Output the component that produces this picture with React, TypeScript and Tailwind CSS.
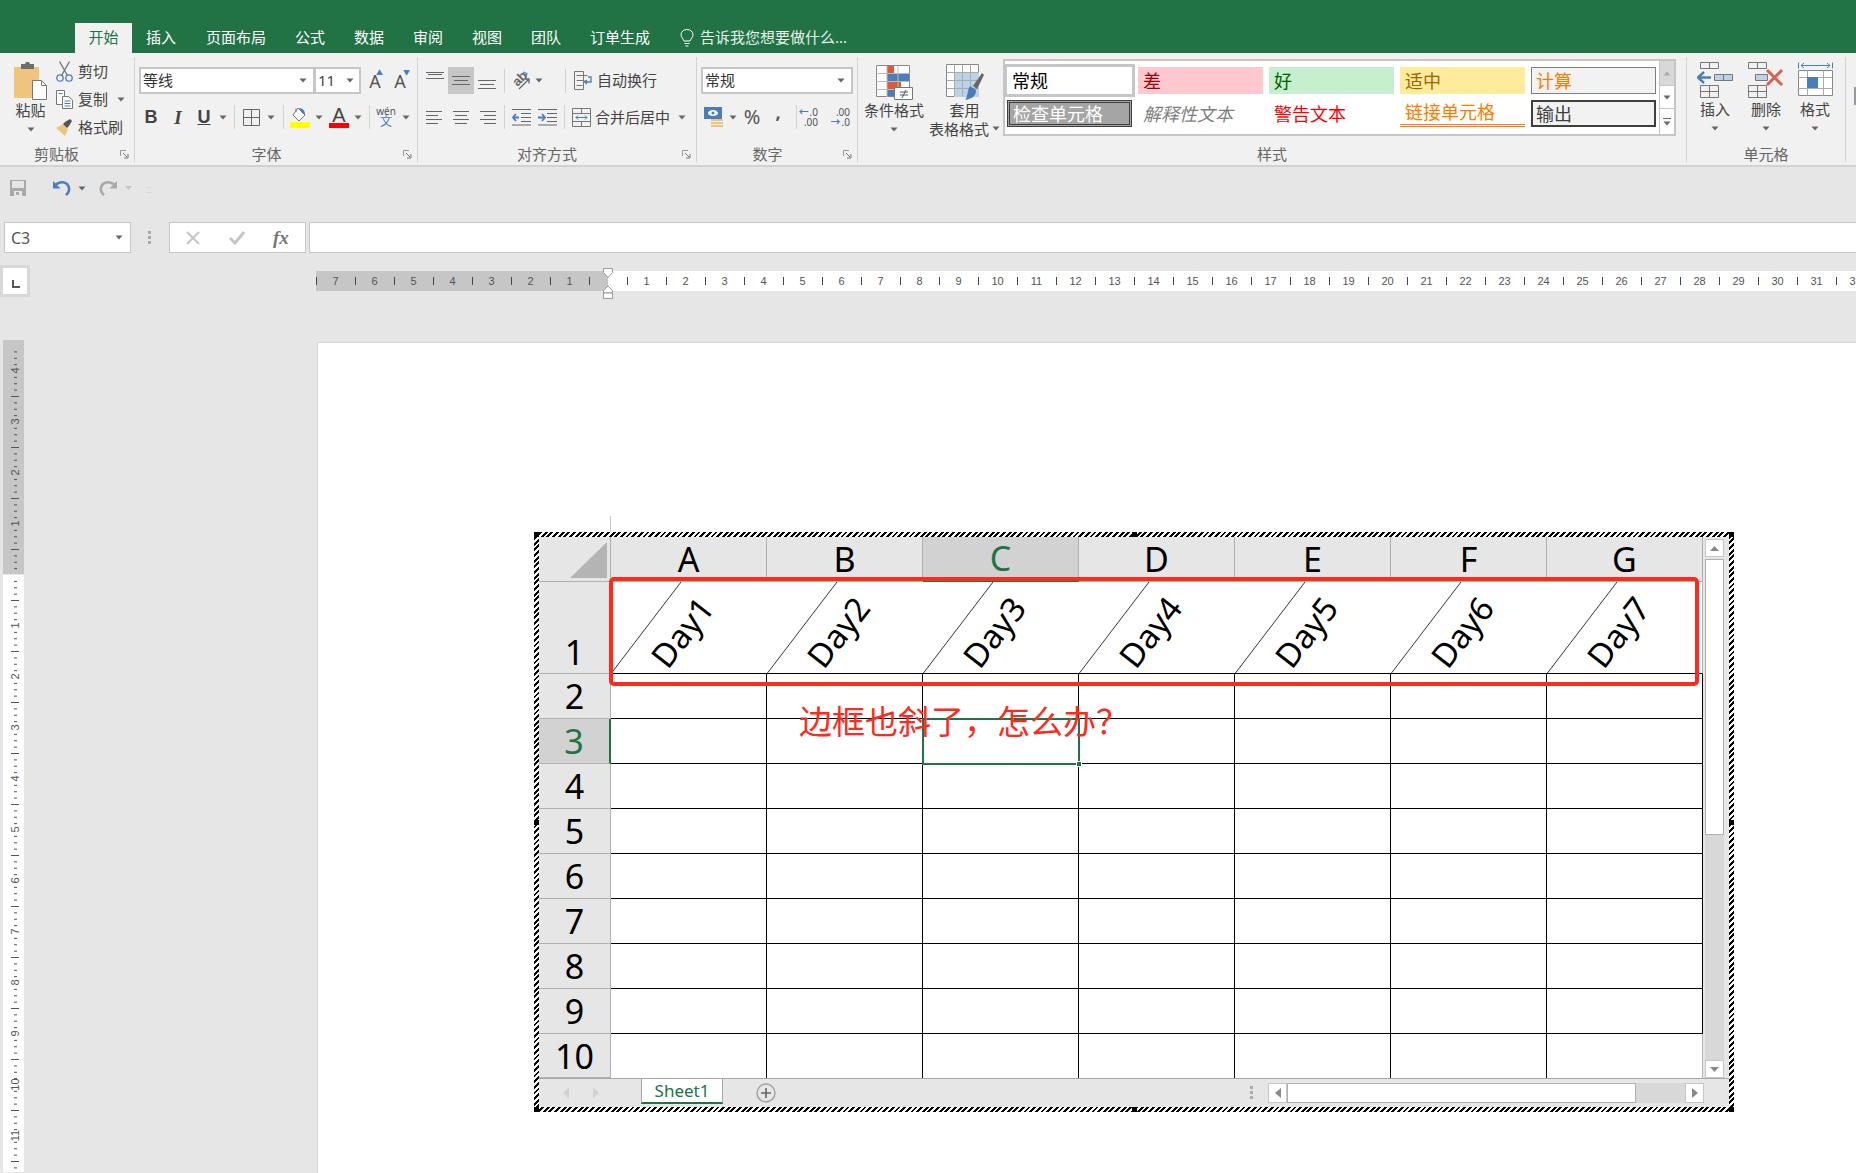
import { Fragment } from "react";

function Caret({ className = "" }: { className?: string }) {
  return (
    <svg width="8" height="5" viewBox="0 0 8 5" className={`shrink-0 ${className}`}>
      <path d="M0.5 0.5h7L4 4.5z" fill="#666" />
    </svg>
  );
}

function Sep({ className = "" }: { className?: string }) {
  return <div className={`h-[24px] w-px shrink-0 bg-[#d2d2d2] ${className}`} />;
}

function Launcher() {
  return (
    <svg width="9" height="9" viewBox="0 0 9 9" className="shrink-0">
      <path d="M.5 6V.5H6" fill="none" stroke="#999" />
      <path d="M3 3l4 4M4 8h4V4" fill="none" stroke="#777" />
    </svg>
  );
}

function Group({ label, width, children, launcher = false, center }: { label: string; width: string; children: React.ReactNode; launcher?: boolean; center?: string }) {
  return (
    <div className={`flex h-[105px] shrink-0 flex-col border-r border-[#d2d2d2] ${width}`}>
      <div className="min-h-0 flex-1">{children}</div>
      <div className="relative flex h-[16px] items-center justify-center text-[15px] leading-none text-[#666]">
        <span className={center}>{label}</span>
        {launcher && (
          <span className="absolute right-[5px] top-[4px] flex">
            <Launcher />
          </span>
        )}
      </div>
    </div>
  );
}

function PasteIcon() {
  return (
    <svg width="35" height="40" viewBox="0 0 35 40">
      <path d="M1 6h25v31H1z" fill="#eec47f" />
      <path d="M8 6V3h4l1-2h3l1 2h4v5H8z" fill="#6d6d6d" />
      <path d="M19.5 19.5h9l5 5v14h-14z" fill="#fff" stroke="#777" />
      <path d="M28.5 19.5v5h5" fill="none" stroke="#777" />
    </svg>
  );
}

function ScissorsIcon() {
  return (
    <svg width="17" height="21" viewBox="0 0 17 21" fill="none">
      <path d="M3.5 .5l8 14M13.5 .5l-8 14" stroke="#777" strokeWidth="1.4" />
      <circle cx="4" cy="17" r="3.2" stroke="#4a7ebb" strokeWidth="1.3" />
      <circle cx="13" cy="17" r="3.2" stroke="#4a7ebb" strokeWidth="1.3" />
    </svg>
  );
}

function CopyIcon() {
  return (
    <svg width="17" height="19" viewBox="0 0 17 19" fill="none">
      <path d="M.5.5h8v14h-8z" fill="#fff" stroke="#777" />
      <path d="M6.5 6.5h6l4 3.5v8.500h-10z" fill="#fff" stroke="#777" />
      <path d="M8.500 11h6M8.500 13.500h6M8.500 16h6M2.500 3.500h4" stroke="#4a7ebb" />
    </svg>
  );
}

function PainterIcon() {
  return (
    <svg width="17" height="17" viewBox="0 0 17 17">
      <path d="M7 5l5 5-3 7-9-8z" fill="#eec47f" />
      <path d="M7 5l4 4 2-2 3-5-2-2-5 3z" fill="#555" />
    </svg>
  );
}

function BorderIcon() {
  return (
    <svg width="17" height="17" viewBox="0 0 17 17" fill="none">
      <path d="M.5.5h16v16H.5zM8.500.5v16M.5 8.500h16" stroke="#666" />
    </svg>
  );
}

function FillIcon() {
  return (
    <svg width="20" height="21" viewBox="0 0 20 21">
      <path d="M8 1l7 7-6 6-6-6z" fill="#fff" stroke="#777" />
      <path d="M6 5V1.500" stroke="#777" fill="none" />
      <path d="M9 1c4 0 6 3 6 7l-3-2z" fill="#4a7ebb" />
      <path d="M0 15h20v6H0z" fill="#ffff00" />
    </svg>
  );
}

function Lines({ rows, align }: { rows: number[]; align: "left" | "center" | "right" }) {
  return (
    <svg width="18" height="18" viewBox="0 0 18 18">
      {rows.map((w, i) => {
        const x = align === "left" ? 0 : align === "right" ? 18 - w : (18 - w) / 2;
        return <rect key={i} x={x} y={3 + i * 4} width={w} height="1" fill="#666" />;
      })}
    </svg>
  );
}

function VAlign({ pos }: { pos: "top" | "middle" | "bottom" }) {
  const ys = pos === "top" ? [5, 7, 11] : pos === "middle" ? [9, 13, 17] : [13, 17, 21];
  return (
    <svg width="18" height="27" viewBox="0 0 18 27">
      <rect x="0" y={ys[0]} width="18" height="1" fill="#666" />
      <rect x="2" y={ys[1]} width="14" height="1" fill="#666" />
      <rect x="0" y={ys[2]} width="18" height="1" fill="#666" />
    </svg>
  );
}

function OrientIcon() {
  return (
    <div className="relative h-[20px] w-[20px]">
      <span className="absolute left-0 top-[1px] -rotate-45 font-['Liberation_Sans',sans-serif] text-[13px] font-bold leading-none text-[#666]">ab</span>
      <svg width="20" height="20" viewBox="0 0 20 20" fill="none" className="absolute left-0 top-0">
        <path d="M7 18L17 8M12.500 8H17v4.500" stroke="#666" strokeWidth="1.300" />
        <path d="M11 1l4 1.500-1.500 4" stroke="#4a7ebb" strokeWidth="1.200" />
      </svg>
    </div>
  );
}

function WrapIcon() {
  return (
    <svg width="19" height="20" viewBox="0 0 19 20" fill="none">
      <path d="M.5.500h9v18h-9zM2.500 4.500h11M2.500 9.500h8M2.500 14.500h6" stroke="#777" />
      <path d="M14 6h3v5h-6M13 9l-2.500 2 2.500 2" stroke="#4a7ebb" strokeWidth="1.300" />
    </svg>
  );
}

function MergeIcon() {
  return (
    <svg width="19" height="19" viewBox="0 0 19 19" fill="none">
      <path d="M.5.500h18v18H.5zM.5 5.500h18M.5 13.500h18M9.500.500v5M9.500 13.500v5" stroke="#777" />
      <path d="M4 9.500h11M6 7.500l-2 2 2 2M13 7.500l2 2-2 2" stroke="#4a7ebb" />
    </svg>
  );
}

function IndentIcon({ flip = false }: { flip?: boolean }) {
  return (
    <svg width="19" height="18" viewBox="0 0 19 18" fill="none">
      <path d="M0 1.500h19M9 5.500h10M9 9.500h10M9 13.500h10M0 17h19" stroke="#666" />
      {flip ? <path d="M7 9.500H1M4 6l-3 3.500L4 13" stroke="#4a7ebb" strokeWidth="1.800" /> : <path d="M0 9.500h7M4 6l3 3.500L4 13" stroke="#4a7ebb" strokeWidth="1.800" />}
    </svg>
  );
}

function MoneyIcon() {
  return (
    <svg width="19" height="20" viewBox="0 0 19 20">
      <rect x="0" y="0" width="18" height="12" fill="#4a7ebb" />
      <ellipse cx="9" cy="6" rx="5" ry="3" fill="#fff" />
      <circle cx="9" cy="6" r="1.500" fill="#4a7ebb" />
      <path d="M7 12h12v2H7zM7 15h12v2H7zM7 18h12v2H7z" fill="#eec47f" />
    </svg>
  );
}

function DecimalIcon({ up }: { up: boolean }) {
  const top = up ? ".0" : ".00";
  const bottom = up ? ".00" : ".0";
  return (
    <div className="flex w-[20px] flex-col items-end text-[10px] leading-[10px] text-[#555]">
      <div className="flex items-center">
        {up && <span className="mr-px text-[10px] font-bold leading-[10px] text-[#4a7ebb]">←</span>}
        <span>{top}</span>
      </div>
      <div className="flex items-center">
        {!up && <span className="mr-px text-[10px] font-bold leading-[10px] text-[#4a7ebb]">→</span>}
        <span>{bottom}</span>
      </div>
    </div>
  );
}

function CondIcon() {
  return (
    <svg width="37" height="35" viewBox="0 0 37 35">
      <path d="M.5.500h33v31H.5z" fill="#fff" stroke="#888" />
      <path d="M11 1h7v7h-7z" fill="#dc5939" />
      <path d="M11 9h22v7H11z" fill="#4a7ebb" />
      <path d="M11 17h14v7H11z" fill="#dc5939" />
      <path d="M11 25h8v6h-8z" fill="#4a7ebb" />
      <path d="M.5 8.500h33M.5 16.500h33M.5 24.500h33M11 1v31M22 1v31" stroke="#bbb" fill="none" />
      <path d="M18.500 22.500h18v12h-18z" fill="#fff" stroke="#777" />
      <path d="M24 27h8M24 30h8M30 25l-4 8" stroke="#555" fill="none" />
    </svg>
  );
}

function TableIcon() {
  return (
    <svg width="38" height="36" viewBox="0 0 38 36">
      <path d="M.5.500h32v32H.5z" fill="#fff" stroke="#888" />
      <path d="M8 8h25v25H8z" fill="#bcd2e9" />
      <path d="M.5 8.500h32M.5 16.500h32M.5 24.500h32M8.500.500v32M16.500.500v32M24.500.500v32" stroke="#aaa" fill="none" />
      <path d="M27 22l9-13 2 2-7 14z" fill="#666" />
      <path d="M24 22l6 4c0 6-4 9-11 10 3-3 2-10 5-14z" fill="#4a7ebb" />
    </svg>
  );
}

function InsertIcon() {
  return (
    <svg width="36" height="36" viewBox="0 0 36 36" fill="none">
      <path d="M3.500.500h18v6h-18zM12.500.500v6M3.500 23.500h18v12h-18zM12.500 23.500v12M3.500 29.500h18" stroke="#777" />
      <path d="M17.500 12.500h18v6h-18z" fill="#bcd2e9" stroke="#777" />
      <path d="M26.500 12.500v6" stroke="#777" />
      <path d="M14 15.500H2M7 10l-6 5.500L7 21" stroke="#4a7ebb" strokeWidth="2.400" />
    </svg>
  );
}

function DeleteIcon() {
  return (
    <svg width="36" height="36" viewBox="0 0 36 36" fill="none">
      <path d="M.5.500h18v6H.5zM9.500.500v6M.5 23.500h18v12H.5zM9.500 23.500v12M.5 29.500h18" stroke="#777" />
      <path d="M7.500 12.500h12v6h-12z" fill="#bcd2e9" stroke="#777" />
      <path d="M19 8l15 15M34 8L19 23" stroke="#d9604a" strokeWidth="3" />
    </svg>
  );
}

function FormatIcon() {
  return (
    <svg width="35" height="37" viewBox="0 0 35 37" fill="none">
      <path d="M.5.500v6M34.500.500v6M3 3.500h29M6 1l-3 2.500L6 6M29 1l3 2.500L29 6" stroke="#4a7ebb" />
      <path d="M.5 8.500h34v25H.5z" fill="#fff" stroke="#888" />
      <path d="M.5 15.500h34M.5 26.500h34M9.500 8.500v25M25.500 8.500v25" stroke="#aaa" />
      <path d="M9 15h11v11H9z" fill="#4a7ebb" />
    </svg>
  );
}

function BigButton({ icon, text, textClass, className = "" }: { icon: React.ReactNode; text: string; textClass: string; className?: string }) {
  return (
    <div className={`flex flex-col items-center ${className}`}>
      <div className="flex h-[38px] items-start">{icon}</div>
      <div className={`whitespace-nowrap text-[15px] leading-[20px] text-[#444] ${textClass}`}>{text}</div>
      <Caret className="mt-[7px]" />
    </div>
  );
}

function Clipboard() {
  return (
    <Group label="剪贴板" width="w-[135px]" launcher center="mr-[21px]">
      <div className="flex pl-[13px] pt-[4px]">
        <div className="flex w-[35px] flex-col items-center">
          <PasteIcon />
          <div className="-mt-[1px] whitespace-nowrap text-[15px] leading-[20px] text-[#444]">粘贴</div>
          <Caret className="mt-[7px]" />
        </div>
        <div className="ml-[8px] flex flex-col text-[15px] leading-[20px] text-[#444]">
          <div className="flex h-[20px] items-center">
            <ScissorsIcon />
            <span className="ml-[5px]">剪切</span>
          </div>
          <div className="mt-[8px] flex h-[20px] items-center">
            <CopyIcon />
            <span className="ml-[5px]">复制</span>
            <Caret className="ml-[9px]" />
          </div>
          <div className="mt-[8px] flex h-[20px] items-center">
            <PainterIcon />
            <span className="ml-[5px]">格式刷</span>
          </div>
        </div>
      </div>
    </Group>
  );
}

function FontGroup() {
  return (
    <Group label="字体" width="w-[283px]" launcher center="mr-[19px]">
      <div className="flex flex-col gap-[10px] pt-[10px]">
        <div className="flex h-[27px] items-center">
          <div className="ml-[4px] flex h-[27px] w-[176px] items-center justify-between border-2 border-[#c6c6c6] bg-white pl-[2px] pr-[6px] text-[15px] text-[#333]">
            等线
            <Caret />
          </div>
          <div className="-ml-[1px] flex h-[27px] w-[47px] items-center justify-between border-2 border-[#c6c6c6] bg-white pl-[2px] pr-[5px] text-[15px] text-[#444]">
            11
            <Caret />
          </div>
          <div className="relative ml-[6px] w-[16px] text-center text-[18px] leading-none text-[#555]">
            A
            <span className="absolute right-0 top-[-3px] text-[7px] leading-none text-[#4a7ebb]">▲</span>
          </div>
          <div className="relative ml-[9px] w-[16px] text-center text-[18px] leading-none text-[#555]">
            A
            <span className="absolute right-[-2px] top-[-3px] text-[7px] leading-none text-[#4a7ebb]">▼</span>
          </div>
        </div>
        <div className="flex h-[26px] items-center">
          <span className="ml-[5px] w-[22px] text-center font-['Liberation_Sans',sans-serif] text-[18px] font-bold leading-none text-[#444]">B</span>
          <span className="ml-[5px] w-[22px] text-center font-['Liberation_Serif',serif] text-[19px] font-bold italic leading-none text-[#444]">I</span>
          <span className="ml-[4px] w-[22px] text-center font-['Liberation_Sans',sans-serif] text-[18px] font-bold leading-none text-[#444] underline">U</span>
          <Caret className="ml-[4px]" />
          <Sep className="ml-[7px]" />
          <div className="ml-[8px] flex"><BorderIcon /></div>
          <Caret className="ml-[7px]" />
          <Sep className="ml-[8px]" />
          <div className="ml-[6px] flex"><FillIcon /></div>
          <Caret className="ml-[5px]" />
          <div className="ml-[6px] flex w-[20px] flex-col items-center">
            <span className="font-['Liberation_Sans',sans-serif] text-[20px] leading-[16px] text-[#444]">A</span>
            <span className="h-[5px] w-[20px] bg-[#ff0000]" />
          </div>
          <Caret className="ml-[5px]" />
          <Sep className="ml-[7px]" />
          <div className="ml-[6px] flex w-[20px] flex-col items-center text-[#555]">
            <span className="text-[10px] leading-[10px]">wén</span>
            <span className="text-[12px] leading-[12px] text-[#4a7ebb]">文</span>
          </div>
          <Caret className="ml-[6px]" />
        </div>
      </div>
    </Group>
  );
}

function AlignGroup() {
  return (
    <Group label="对齐方式" width="w-[279px]" launcher center="mr-[20px]">
      <div className="flex flex-col gap-[10px] pt-[10px]">
        <div className="flex h-[27px] items-center">
          <div className="ml-[4px] flex h-[27px] w-[26px] justify-center"><VAlign pos="top" /></div>
          <div className="flex h-[27px] w-[26px] justify-center bg-[#c6c6c6]"><VAlign pos="middle" /></div>
          <div className="flex h-[27px] w-[26px] justify-center"><VAlign pos="bottom" /></div>
          <Sep className="ml-[4px]" />
          <div className="ml-[7px] flex"><OrientIcon /></div>
          <Caret className="ml-[3px]" />
          <Sep className="ml-[22px]" />
          <div className="ml-[8px] flex"><WrapIcon /></div>
          <span className="ml-[4px] whitespace-nowrap text-[15px] text-[#444]">自动换行</span>
        </div>
        <div className="flex h-[26px] items-center">
          <div className="ml-[4px] flex w-[26px] justify-center"><Lines rows={[16, 12, 16, 12]} align="left" /></div>
          <div className="flex w-[26px] justify-center"><Lines rows={[16, 12, 16, 12]} align="center" /></div>
          <div className="flex w-[26px] justify-center"><Lines rows={[16, 12, 16, 12]} align="right" /></div>
          <Sep className="ml-[4px]" />
          <div className="ml-[7px] flex"><IndentIcon flip /></div>
          <div className="ml-[7px] flex"><IndentIcon /></div>
          <Sep className="ml-[7px]" />
          <div className="ml-[7px] flex"><MergeIcon /></div>
          <span className="ml-[4px] whitespace-nowrap text-[15px] text-[#444]">合并后居中</span>
          <Caret className="ml-[8px]" />
        </div>
      </div>
    </Group>
  );
}

function NumberGroup() {
  return (
    <Group label="数字" width="w-[161px]" launcher center="mr-[19px]">
      <div className="flex flex-col gap-[10px] pt-[10px]">
        <div className="ml-[4px] flex h-[27px] w-[152px] items-center justify-between border-2 border-[#c6c6c6] bg-white pl-[2px] pr-[6px] text-[15px] text-[#333]">
          常规
          <Caret />
        </div>
        <div className="flex h-[26px] items-center text-[#555]">
          <div className="ml-[7px] flex"><MoneyIcon /></div>
          <Caret className="ml-[6px]" />
          <span className="ml-[6px] w-[18px] text-center text-[20px] leading-none">%</span>
          <span className="ml-[8px] w-[18px] -translate-y-[5px] text-center text-[18px] font-bold leading-none">,</span>
          <Sep className="ml-[9px]" />
          <div className="ml-[1px]"><DecimalIcon up /></div>
          <div className="ml-[12px]"><DecimalIcon up={false} /></div>
        </div>
      </div>
    </Group>
  );
}

const styleCells = [
  { text: "常规", cls: "-m-[3px] border-[3px] border-[#c6c6c6] bg-white pl-[5px] text-black" },
  { text: "差", cls: "bg-[#ffc7ce] pl-[5px] text-[#9c0006]" },
  { text: "好", cls: "bg-[#c6efce] pl-[5px] text-[#006100]" },
  { text: "适中", cls: "bg-[#ffeb9c] pl-[5px] text-[#9c6500]" },
  { text: "计算", cls: "border border-[#7f7f7f] bg-[#f2f2f2] pl-[4px] text-[#fa7d00]" },
  { text: "检查单元格", cls: "border-[3px] border-double border-[#3f3f3f] bg-[#a5a5a5] pl-[3px] text-white" },
  { text: "解释性文本", cls: "pl-[5px] italic text-[#7f7f7f]" },
  { text: "警告文本", cls: "pl-[5px] text-[#ff0000]" },
  { text: "链接单元格", cls: "border-b-[3px] border-double border-[#ff8001] pl-[5px] text-[#fa7d00]" },
  { text: "输出", cls: "border-2 border-[#3f3f3f] bg-[#f2f2f2] pl-[3px] text-[#3f3f3f]" },
];

function StylesGroup() {
  return (
    <Group label="样式" width="w-[829px]">
      <div className="flex">
        <BigButton icon={<CondIcon />} text="条件格式" textClass="-mt-[3px]" className="ml-[6px] mt-[8px] w-[60px]" />
        <div className="ml-[5px] mt-[7px] flex w-[60px] flex-col items-center">
          <div className="ml-[11px] flex h-[39px] items-start"><TableIcon /></div>
          <div className="-mt-[3px] ml-[11px] text-[15px] leading-[20px] text-[#444]">套用</div>
          <div className="whitespace-nowrap text-[15px] leading-[18px] text-[#444]">表格格式</div>
        </div>
        <Caret className="ml-[3px] mt-[69px]" />
        <div className="ml-[3px] mt-[2px] flex h-[77px]">
          <div className="grid h-[77px] w-[656px] grid-cols-[125px_125px_125px_125px_125px] grid-rows-[27px_27px] gap-[6px] border-2 border-r-0 border-[#c6c6c6] bg-white pl-[2px] pt-[6px]">
            {styleCells.map((c) => (
              <div key={c.text} className={`flex items-center overflow-hidden whitespace-nowrap text-[18px] leading-none ${c.cls}`}>
                {c.text}
              </div>
            ))}
          </div>
          <div className="flex w-[17px] flex-col border-2 border-l border-[#c6c6c6] bg-white">
            <div className="flex h-[25px] items-center justify-center border-b border-[#c6c6c6] bg-[#d8d8d8]">
              <svg width="8" height="5" viewBox="0 0 8 5"><path d="M.5 4.500h7L4 .5z" fill="#aaa" /></svg>
            </div>
            <div className="flex h-[23px] items-center justify-center border-b border-[#c6c6c6]"><Caret /></div>
            <div className="flex flex-1 flex-col items-center justify-center">
              <span className="mb-[2px] h-px w-[8px] bg-[#666]" />
              <Caret />
            </div>
          </div>
        </div>
      </div>
    </Group>
  );
}

function CellsGroup() {
  return (
    <Group label="单元格" width="w-[159px]">
      <div className="flex pt-[5px]">
        <BigButton icon={<InsertIcon />} text="插入" textClass="-mt-[1px]" className="ml-[10px] w-[36px]" />
        <BigButton icon={<DeleteIcon />} text="删除" textClass="-mt-[1px]" className="ml-[15px] w-[36px]" />
        <BigButton icon={<FormatIcon />} text="格式" textClass="-mt-[1px]" className="ml-[13px] w-[36px]" />
      </div>
    </Group>
  );
}

function TopChrome() {
  const tabs = [
    ["开始", "w-[57px]"],
    ["插入", "w-[58px]"],
    ["页面布局", "w-[92px]"],
    ["公式", "w-[56px]"],
    ["数据", "w-[62px]"],
    ["审阅", "w-[56px]"],
    ["视图", "w-[62px]"],
    ["团队", "w-[56px]"],
    ["订单生成", "w-[92px]"],
  ];
  return (
    <>
      <div className="flex h-[53px] shrink-0 items-end bg-[#217346] pl-[75px] text-[15px] text-white">
        {tabs.map(([t, w], i) => (
          <div key={t} className={`flex h-[30px] items-center justify-center whitespace-nowrap pb-[2px] ${w} ${i === 0 ? "bg-[#f1f1f1] text-[#217346]" : ""}`}>
            {t}
          </div>
        ))}
        <div className="ml-[14px] flex h-[30px] items-center pb-[1px] text-[#e8f0eb]">
          <svg width="14" height="18" viewBox="0 0 14 18" fill="none" stroke="#fff">
            <path d="M4 12C3 9 1 8.500 1 5.500a6 5 0 0 1 12 0C13 8.500 11 9 10 12z" />
            <path d="M4.500 14.500h5M5.500 17h3" />
          </svg>
          <span className="ml-[6px] whitespace-nowrap">告诉我您想要做什么...</span>
        </div>
      </div>
      <div className="flex h-[114px] shrink-0 overflow-hidden border-b-2 border-[#d2d2d2] bg-[#f1f1f1] pt-[4px]">
        <Clipboard />
        <FontGroup />
        <AlignGroup />
        <NumberGroup />
        <StylesGroup />
        <CellsGroup />
        <div className="ml-[8px] mt-[30px] h-[18px] w-[6px] border-2 border-r-0 border-[#999] bg-white" />
      </div>
      <div className="flex h-[55px] shrink-0 items-start pl-[10px] pt-[13px]">
        <svg width="16" height="16" viewBox="0 0 16 16">
          <path d="M0 0h16v16H0z" fill="#a9a9a9" />
          <path d="M2 1h12v7H2z" fill="#e6e6e6" />
          <path d="M4 11h8v5H4z" fill="#e6e6e6" />
          <path d="M6 12h3v3H6z" fill="#a9a9a9" />
        </svg>
        <svg width="19" height="17" viewBox="0 0 19 17" fill="none" className="ml-[26px]">
          <path d="M2 7c3-5 9-6 13-3 3 3 3 8-1 11" stroke="#4a7ebb" strokeWidth="2.600" />
          <path d="M1 1v7.500h7.500z" fill="#4a7ebb" />
        </svg>
        <Caret className="ml-[7px] mt-[6px]" />
        <svg width="18" height="17" viewBox="0 0 18 17" fill="none" className="ml-[13px]">
          <path d="M17 7C14 2 8 1 4 4c-3 3-3 8 1 11" stroke="#a9a9a9" strokeWidth="2.600" />
          <path d="M18 1v7.500h-7.500z" fill="#a9a9a9" />
        </svg>
        <svg width="7" height="5" viewBox="0 0 7 5" className="ml-[8px] mt-[6px]"><path d="M0 0h7L3.500 4z" fill="#c6c6c6" /></svg>
        <span className="ml-[14px] mt-[7px] h-[6px] w-[6px] border-y border-[#d8d8d8]" />
      </div>
      <div className="flex h-[31px] shrink-0 items-stretch">
        <div className="ml-[4px] flex w-[127px] items-center justify-between border border-[#c6c6c6] bg-white pl-[6px] pr-[7px] text-[16px] text-[#555]">
          C3
          <Caret />
        </div>
        <div className="ml-[16px] flex w-[5px] flex-col items-center justify-center gap-[2px]">
          <span className="h-[3px] w-[3px] bg-[#aaa]" />
          <span className="h-[3px] w-[3px] bg-[#aaa]" />
          <span className="h-[3px] w-[3px] bg-[#aaa]" />
        </div>
        <div className="ml-[17px] flex w-[137px] items-center justify-around border border-[#c6c6c6] bg-white px-[2px]">
          <svg width="14" height="14" viewBox="0 0 14 14"><path d="M1 1l12 12M13 1L1 13" stroke="#c6c6c6" strokeWidth="2" /></svg>
          <svg width="16" height="14" viewBox="0 0 16 14" fill="none"><path d="M1 7l5 5 9-11" stroke="#c6c6c6" strokeWidth="3" /></svg>
          <span className="font-['Liberation_Serif',serif] text-[19px] font-bold italic leading-none text-[#777]">fx</span>
        </div>
        <div className="ml-[3px] flex-1 border border-r-0 border-[#c6c6c6] bg-white" />
      </div>
    </>
  );
}

function RulerUnit({ n }: { n: number }) {
  return (
    <div className="flex w-[39px] shrink-0 items-center">
      <span className="h-[8px] w-px shrink-0 bg-[#444]" />
      <span className="flex-1 pr-px text-center">{n}</span>
    </div>
  );
}

function HRuler() {
  const left = [7, 6, 5, 4, 3, 2, 1];
  const right = Array.from({ length: 33 }, (_, i) => i + 1);
  return (
    <div className="relative mt-[12px] flex h-[32px] shrink-0">
      <div className="flex h-[32px] w-[30px] items-center border-[3px] border-[#d8d8d8] bg-white pl-[9px]">
        <span className="h-[8px] w-[8px] translate-y-[3px] border-b-2 border-l-2 border-[#555]" />
      </div>
      <div className="ml-[286px] mt-[6px] flex h-[20px] flex-1 overflow-hidden font-['Liberation_Sans',sans-serif] text-[11px] leading-none text-[#555]">
        <div className="flex w-[292px] shrink-0 items-center bg-[#c6c6c6]">
          {left.map((n) => <RulerUnit key={n} n={n} />)}
          <span className="h-[8px] w-px shrink-0 bg-[#444]" />
        </div>
        <div className="flex flex-1 items-center bg-white pl-[19px]">
          {right.map((n) => <RulerUnit key={n} n={n} />)}
        </div>
      </div>
      <svg width="12" height="31" viewBox="0 0 12 31" className="absolute left-[602px] top-[3px]" fill="#fff" stroke="#999">
        <path d="M1.500.500h9v4l-4.500 5-4.500-5z" />
        <path d="M6 18l4.500 4.500V25h-9v-2.500z" />
        <path d="M1.500 25h9v5.500h-9z" />
      </svg>
    </div>
  );
}

function VRuler() {
  const zero = 234.5;
  const eighth = 51 / 8;
  const ticks: number[] = [];
  for (let k = -36; k <= 96; k++) ticks.push(k);
  return (
    <svg width="21" height="832" viewBox="0 0 21 832" className="ml-[3px] shrink-0">
      <rect width="21" height="234" fill="#c6c6c6" />
      <rect y="235" width="21" height="597" fill="#fff" />
      {ticks.map((k) => {
        const y = zero + k * eighth;
        if (y < 8) return null;
        if (k % 8 === 0) {
          const n = Math.abs(k / 8);
          if (n === 0) return null;
          return (
            <text key={k} x="0" y="0" transform={`translate(16 ${y}) rotate(-90)`} textAnchor="middle" fontSize="11" fill="#555" fontFamily="Liberation Sans">
              {n}
            </text>
          );
        }
        const big = k % 4 === 0;
        return <rect key={k} x={big ? 8 : 11} y={y} width={big ? 8 : 3} height="1" fill="#555" />;
      })}
    </svg>
  );
}

const columns = ["A", "B", "C", "D", "E", "F", "G"];
const rowsBelow = [2, 3, 4, 5, 6, 7, 8, 9, 10];

function Sheet() {
  return (
    <div className="relative h-[580px] w-[1200px] bg-[repeating-linear-gradient(135deg,#000_0,#000_2px,#fff_2px,#fff_4px)] p-[5px]">
      <span className="absolute left-0 top-0 h-[5px] w-[5px] bg-black" />
      <span className="absolute right-0 top-0 h-[5px] w-[5px] bg-black" />
      <span className="absolute bottom-0 left-0 h-[5px] w-[5px] bg-black" />
      <span className="absolute bottom-0 right-0 h-[5px] w-[5px] bg-black" />
      <span className="absolute left-[598px] top-0 h-[5px] w-[5px] bg-black" />
      <span className="absolute left-[598px] bottom-0 h-[5px] w-[5px] bg-black" />
      <span className="absolute left-0 top-[288px] h-[5px] w-[5px] bg-black" />
      <span className="absolute right-0 top-[288px] h-[5px] w-[5px] bg-black" />

      <div className="flex h-[570px] flex-col bg-[#e6e6e6] font-['Noto_Sans','Noto_Sans_CJK_SC',sans-serif]">
        <div className="flex h-[541px]">
          <div className="relative">
            <div className="grid grid-cols-[72px_repeat(7,156px)] grid-rows-[45px_92px_repeat(8,45px)_44px] text-[34px] leading-none text-black">
              <div className="flex items-end justify-end border-b border-r border-[#b0b0b0] pb-[3px] pr-[3px]">
                <svg width="37" height="36" viewBox="0 0 37 36"><path d="M37 0v36H0z" fill="#b4b4b4" /></svg>
              </div>
              {columns.map((c) => (
                <div key={c} className={`flex items-center justify-center ${c === "C" ? "border-b-[3px] border-r border-b-[#217346] border-r-[#b0b0b0] bg-[#d2d2d2] text-[#217346]" : "border-b border-r border-[#b0b0b0]"}`}>
                  {c}
                </div>
              ))}
              <div className="flex items-end justify-center border-b border-r border-[#b0b0b0] pb-[4px]">1</div>
              {columns.map((c, i) => (
                <div key={c} className={`relative overflow-hidden border-b border-black bg-white ${i === 6 ? "border-r border-r-[#b5b5b5]" : ""}`}>
                  <svg width="72" height="92" viewBox="0 0 72 92" className="absolute left-0 top-0" fill="none">
                    <path d="M.5 91L70 0" stroke="#000" strokeWidth=".8" />
                  </svg>
                  <span className="absolute left-[71px] top-[50px] -translate-x-1/2 -translate-y-1/2 -rotate-[52deg] whitespace-nowrap text-[33px] leading-none">
                    Day{i + 1}
                  </span>
                </div>
              ))}
              {rowsBelow.map((r) => (
                <Fragment key={r}>
                  <div className={`flex items-center justify-center border-b ${r === 3 ? "border-r-2 border-b-[#b0b0b0] border-r-[#217346] bg-[#d2d2d2] text-[#217346]" : "border-r border-[#b0b0b0]"}`}>
                    {r}
                  </div>
                  {columns.map((c, i) => (
                    <div key={c} className={`bg-white ${r < 10 ? "border-b border-black" : ""} ${i === 6 ? "border-r border-[#b5b5b5]" : "border-r border-black"}`} />
                  ))}
                </Fragment>
              ))}
            </div>

            {/* selected cell */}
            <div className="absolute left-[383px] top-[181px] h-[47px] w-[158px] border-2 border-[#217346]" />
            <span className="absolute left-[537px] top-[224px] h-[6px] w-[6px] border border-white bg-[#217346]" />
            {/* annotation on top of the picture */}
            <div className="absolute left-[70px] top-[40px] h-[109px] w-[1090px] rounded-[5px] border-4 border-[#fe2a1c]" />
            <div className="absolute left-[260px] top-[159px] whitespace-nowrap font-['Noto_Sans_CJK_SC',sans-serif] text-[33px] leading-[48px] text-[#fe2a1c]">
              边框也斜了，怎么办？
            </div>
          </div>

          <div className="flex w-[25px] flex-col items-center pr-[2px] pt-[2px]">
            <div className="flex h-[18px] w-[19px] items-center justify-center border border-[#c6c6c6] bg-white">
              <svg width="9" height="5" viewBox="0 0 9 5"><path d="M0 5h9L4.500 0z" fill="#888" /></svg>
            </div>
            <div className="mt-[2px] h-[276px] w-[19px] border border-[#b0b0b0] bg-white" />
            <div className="w-[19px] flex-1 bg-[#d8d8d8]" />
            <div className="flex h-[18px] w-[19px] items-center justify-center border border-[#c6c6c6] bg-white">
              <svg width="9" height="5" viewBox="0 0 9 5"><path d="M0 0h9L4.500 5z" fill="#888" /></svg>
            </div>
          </div>
        </div>

        <div className="flex h-[29px] items-start border-t border-[#a8a8a8] pr-[25px]">
          <svg width="36" height="12" viewBox="0 0 36 12" className="ml-[24px] mt-[8px] shrink-0" fill="#d2d2d2">
            <path d="M6 0v12L0 6zM30 0v12l6-6z" />
          </svg>
          <div className="ml-[42px] flex h-[25px] w-[82px] items-center justify-center border-x border-b-2 border-[#a8a8a8] border-b-[#217346] bg-white text-[17px] leading-none text-[#217346]">
            Sheet1
          </div>
          <svg width="20" height="20" viewBox="0 0 20 20" className="ml-[33px] mt-[4px] shrink-0" fill="none">
            <circle cx="10" cy="10" r="9" stroke="#a0a0a0" strokeWidth="1.400" />
            <path d="M5 10h10M10 5v10" stroke="#666" strokeWidth="1.600" />
          </svg>
          <div className="ml-[474px] mt-[7px] flex flex-col gap-[2px]">
            <span className="h-[3px] w-[3px] bg-[#aaa]" />
            <span className="h-[3px] w-[3px] bg-[#aaa]" />
            <span className="h-[3px] w-[3px] bg-[#aaa]" />
          </div>
          <div className="ml-[15px] mt-[4px] flex h-[20px] flex-1">
            <div className="flex w-[19px] items-center justify-center border border-[#c6c6c6] bg-white">
              <svg width="6" height="10" viewBox="0 0 6 10"><path d="M6 0v10L0 5z" fill="#888" /></svg>
            </div>
            <div className="h-[20px] w-[349px] border border-[#b0b0b0] bg-white" />
            <div className="flex-1 bg-[#d8d8d8]" />
            <div className="flex w-[19px] items-center justify-center border border-[#c6c6c6] bg-white">
              <svg width="6" height="10" viewBox="0 0 6 10"><path d="M0 0v10l6-5z" fill="#888" /></svg>
            </div>
          </div>
        </div>
      </div>
    </div>
  );
}

export default function App() {
  return (
    <div className="flex h-[1173px] w-[1856px] flex-col overflow-hidden bg-[#e6e6e6] font-['Noto_Sans','Noto_Sans_CJK_SC',sans-serif]">
      <TopChrome />
      <HRuler />
      <div className="flex min-h-0 flex-1 pt-[43px]">
        <VRuler />
        <div className="relative ml-[293px] mt-[2px] flex-1 border-l border-t border-[#d6d6d6] bg-white pl-[216px] pt-[189px]">
          <span className="absolute left-[292px] top-[173px] h-[16px] w-px bg-[#c6c6c6]" />
          <Sheet />
        </div>
      </div>
    </div>
  );
}
